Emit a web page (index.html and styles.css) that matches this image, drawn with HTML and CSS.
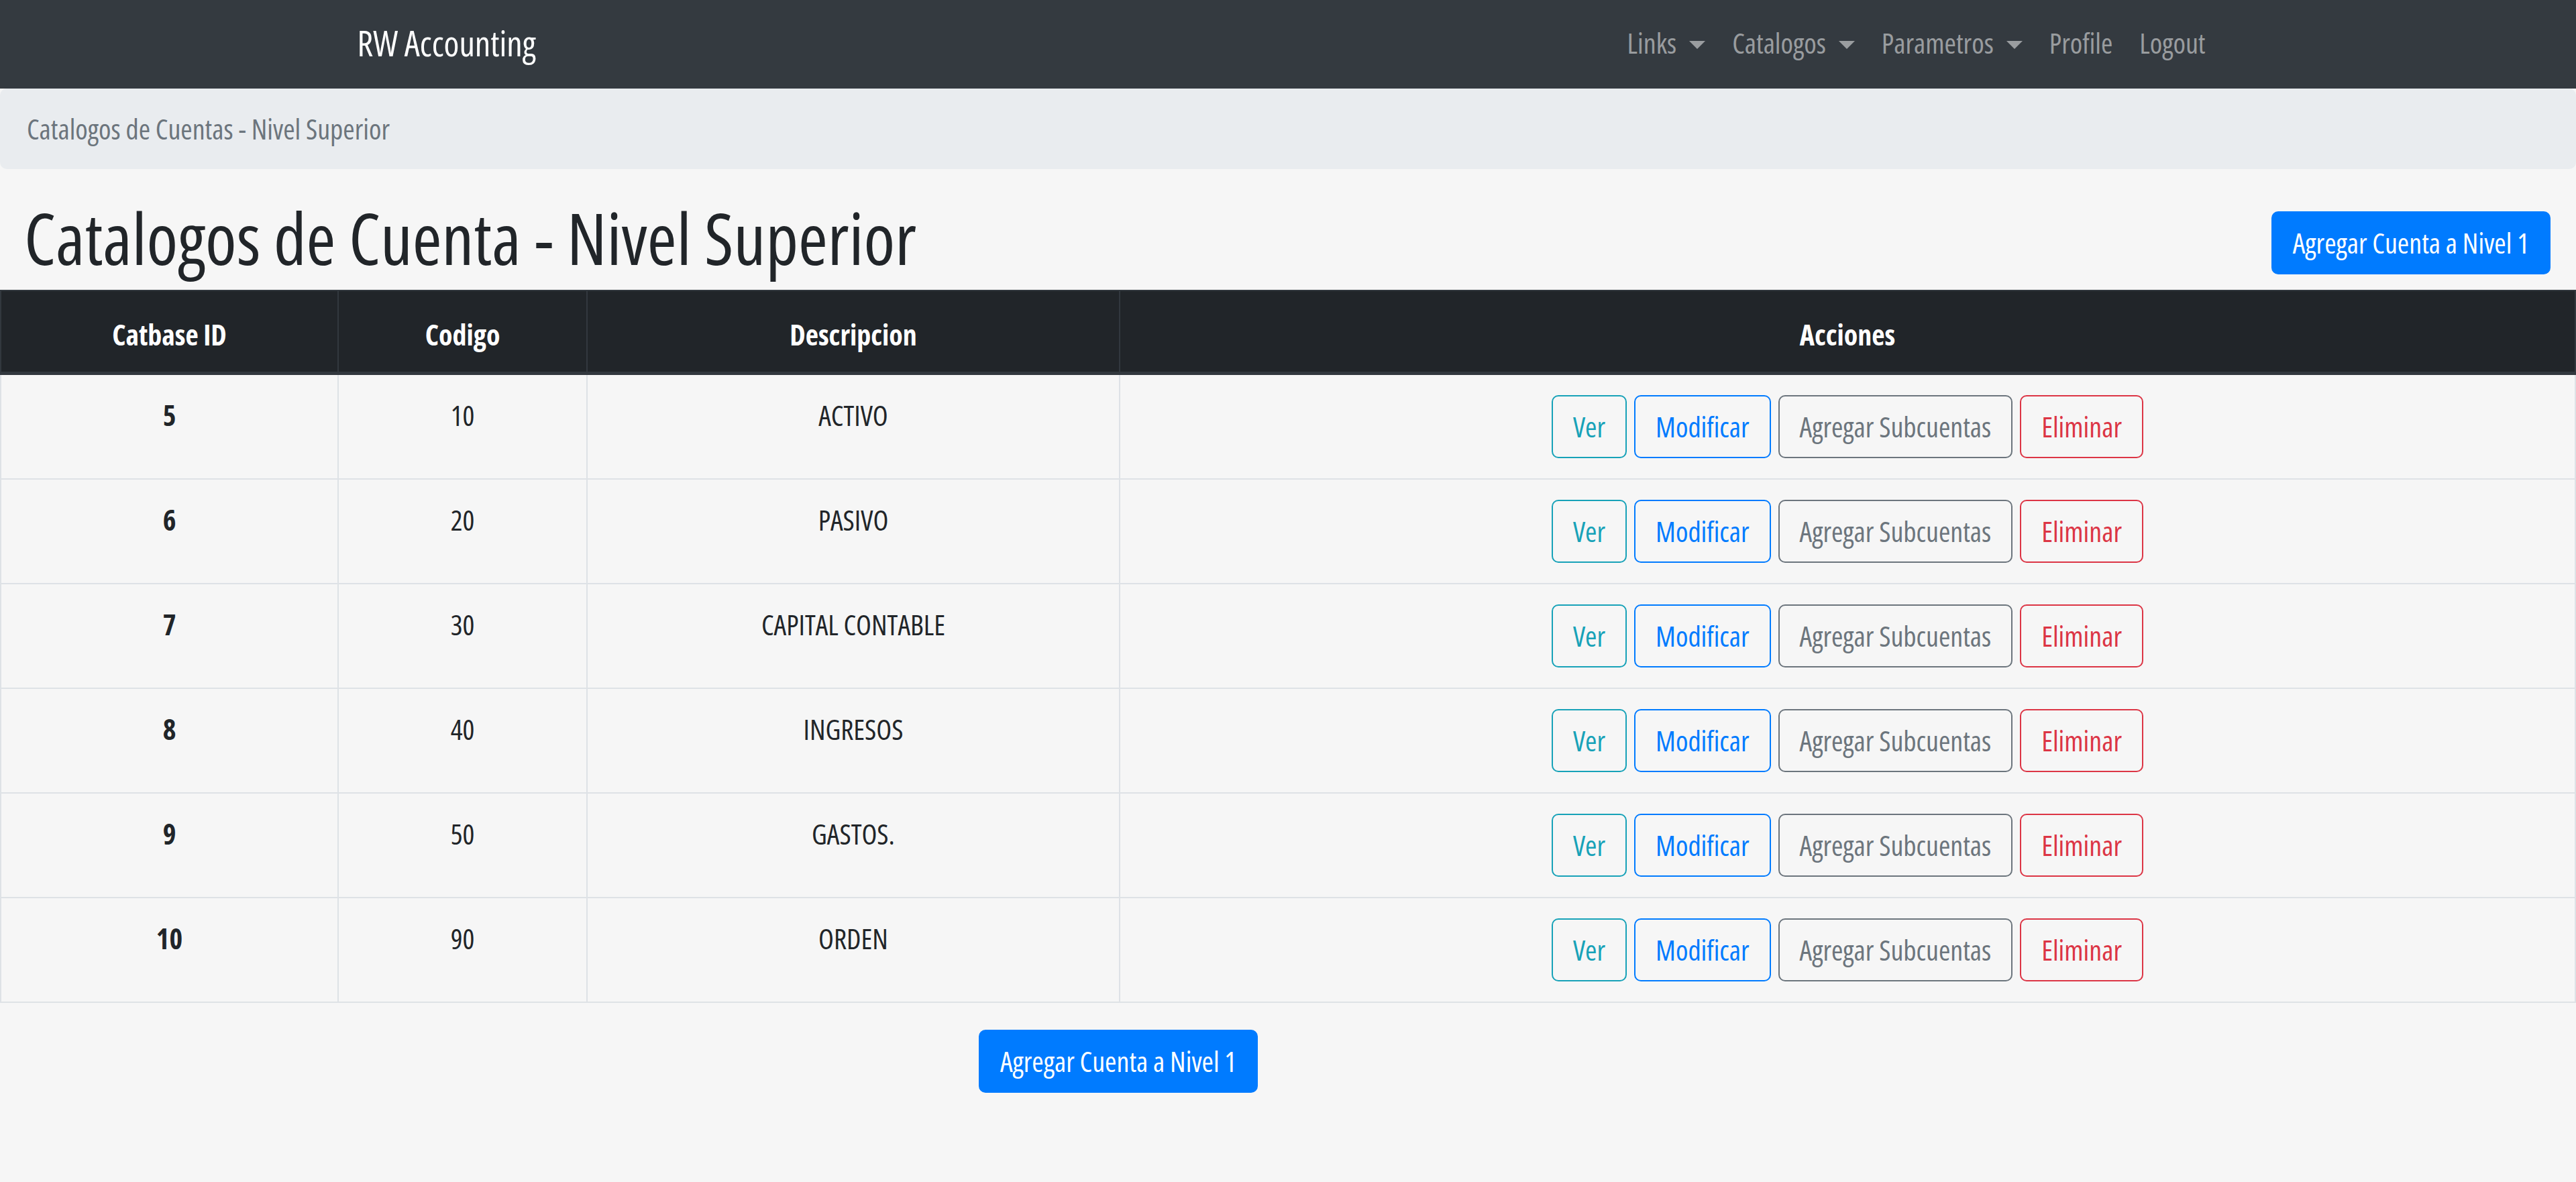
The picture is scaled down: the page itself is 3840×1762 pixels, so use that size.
FILE: index.html
```html
<!DOCTYPE html>
<html lang="es">
<head>
<meta charset="utf-8">
<title>Catalogos de Cuenta - Nivel Superior</title>
<link rel="stylesheet" href="styles.css">
</head>
<body>
<nav class="navbar">
  <div class="nav-container">
    <a class="brand" href="#">RW Accounting</a>
    <ul class="nav-links">
      <li><a class="nav-link dropdown" href="#">Links</a></li>
      <li><a class="nav-link dropdown" href="#">Catalogos</a></li>
      <li><a class="nav-link dropdown" href="#">Parametros</a></li>
      <li><a class="nav-link" href="#">Profile</a></li>
      <li><a class="nav-link" href="#">Logout</a></li>
    </ul>
  </div>
</nav>
<div class="breadcrumb">Catalogos de Cuentas - Nivel Superior</div>
<div class="page-head">
  <h1 class="title">Catalogos de Cuenta - Nivel Superior</h1>
  <a class="btn btn-primary" href="#">Agregar Cuenta a Nivel 1</a>
</div>
<table class="grid">
  <colgroup>
    <col class="c-id"><col class="c-code"><col class="c-desc"><col class="c-act">
  </colgroup>
  <thead>
    <tr><th>Catbase ID</th><th>Codigo</th><th>Descripcion</th><th>Acciones</th></tr>
  </thead>
  <tbody>
    <tr><th>5</th><td>10</td><td>ACTIVO</td><td><div class="actions"><a class="btn btn-info" href="#">Ver</a><a class="btn btn-outline-primary" href="#">Modificar</a><a class="btn btn-secondary" href="#">Agregar Subcuentas</a><a class="btn btn-danger" href="#">Eliminar</a></div></td></tr>
    <tr><th>6</th><td>20</td><td>PASIVO</td><td><div class="actions"><a class="btn btn-info" href="#">Ver</a><a class="btn btn-outline-primary" href="#">Modificar</a><a class="btn btn-secondary" href="#">Agregar Subcuentas</a><a class="btn btn-danger" href="#">Eliminar</a></div></td></tr>
    <tr><th>7</th><td>30</td><td>CAPITAL CONTABLE</td><td><div class="actions"><a class="btn btn-info" href="#">Ver</a><a class="btn btn-outline-primary" href="#">Modificar</a><a class="btn btn-secondary" href="#">Agregar Subcuentas</a><a class="btn btn-danger" href="#">Eliminar</a></div></td></tr>
    <tr><th>8</th><td>40</td><td>INGRESOS</td><td><div class="actions"><a class="btn btn-info" href="#">Ver</a><a class="btn btn-outline-primary" href="#">Modificar</a><a class="btn btn-secondary" href="#">Agregar Subcuentas</a><a class="btn btn-danger" href="#">Eliminar</a></div></td></tr>
    <tr><th>9</th><td>50</td><td>GASTOS.</td><td><div class="actions"><a class="btn btn-info" href="#">Ver</a><a class="btn btn-outline-primary" href="#">Modificar</a><a class="btn btn-secondary" href="#">Agregar Subcuentas</a><a class="btn btn-danger" href="#">Eliminar</a></div></td></tr>
    <tr><th>10</th><td>90</td><td>ORDEN</td><td><div class="actions"><a class="btn btn-info" href="#">Ver</a><a class="btn btn-outline-primary" href="#">Modificar</a><a class="btn btn-secondary" href="#">Agregar Subcuentas</a><a class="btn btn-danger" href="#">Eliminar</a></div></td></tr>
  </tbody>
</table>
<div class="page-foot">
  <a class="btn btn-primary" href="#">Agregar Cuenta a Nivel 1</a>
</div>
</body>
</html>
```

FILE: styles.css
```css
* { box-sizing: border-box; }

html, body {
  margin: 0;
  padding: 0;
}

body {
  background: #f6f6f6;
  color: #212529;
  font-family: "Open Sans", "DejaVu Sans Condensed", sans-serif;
  font-stretch: 75%;
  font-weight: 500;
  font-size: 42px;
  line-height: 60px;
  min-height: 1762px;
}

a { text-decoration: none; }

/* navbar */
.navbar {
  background: #343a40;
  height: 132px;
}

.nav-container {
  width: 2850px;
  height: 100%;
  margin: 0 auto;
  padding: 0 37.5px 4px;
  display: flex;
  align-items: center;
  justify-content: space-between;
}

.brand {
  color: #fff;
  font-size: 52px;
  line-height: 60px;
}

.nav-links {
  list-style: none;
  margin: 0;
  padding: 0;
  display: flex;
}

.nav-link {
  display: flex;
  align-items: center;
  padding: 0 20px;
  color: rgba(255, 255, 255, 0.5);
  line-height: 60px;
}

.dropdown::after {
  content: "";
  display: block;
  margin-left: 19px;
  margin-top: 6px;
  border-top: 12px solid;
  border-left: 12px solid transparent;
  border-right: 12px solid transparent;
}

/* breadcrumb */
.breadcrumb {
  background: #e9ecef;
  color: #6c757d;
  border-radius: 10px;
  padding: 30px 40px;
  margin-bottom: 40px;
}

/* heading row */
.page-head {
  display: flex;
  align-items: center;
  justify-content: space-between;
  height: 140px;
  padding: 0 38px 0 36px;
}

.title {
  margin: 0;
  padding-bottom: 16px;
  font-size: 106px;
  font-weight: 500;
  line-height: 120px;
}

/* buttons */
.btn {
  display: inline-block;
  padding: 15px 30px;
  border: 2.5px solid transparent;
  border-radius: 10px;
  line-height: 60px;
  white-space: nowrap;
  background: transparent;
}

.btn-primary {
  background: #007bff;
  border-color: #007bff;
  color: #fff;
}

.btn-info { color: #17a2b8; border-color: #17a2b8; }
.btn-outline-primary { color: #007bff; border-color: #007bff; }
.btn-secondary { color: #6c757d; border-color: #6c757d; }
.btn-danger { color: #dc3545; border-color: #dc3545; }

/* table */
.grid {
  width: 100%;
  table-layout: fixed;
  border-collapse: collapse;
  border: 2.5px solid #dee2e6;
}

.c-id { width: 503px; }
.c-code { width: 371px; }
.c-desc { width: 794px; }
.c-act { width: auto; }

.grid th,
.grid td {
  padding: 30px;
  text-align: center;
  vertical-align: top;
  border: 2.5px solid #dee2e6;
}

.grid thead th {
  background: #212529;
  color: #fff;
  font-weight: 700;
  vertical-align: bottom;
  padding: 35px 30px 25px;
  border-color: #32383e;
  border-bottom-width: 5px;
}

.grid tbody th {
  font-weight: 700;
}

.actions {
  display: flex;
  justify-content: center;
  gap: 11px;
}

.page-foot {
  padding: 40px 0 0 1459px;
}
```
